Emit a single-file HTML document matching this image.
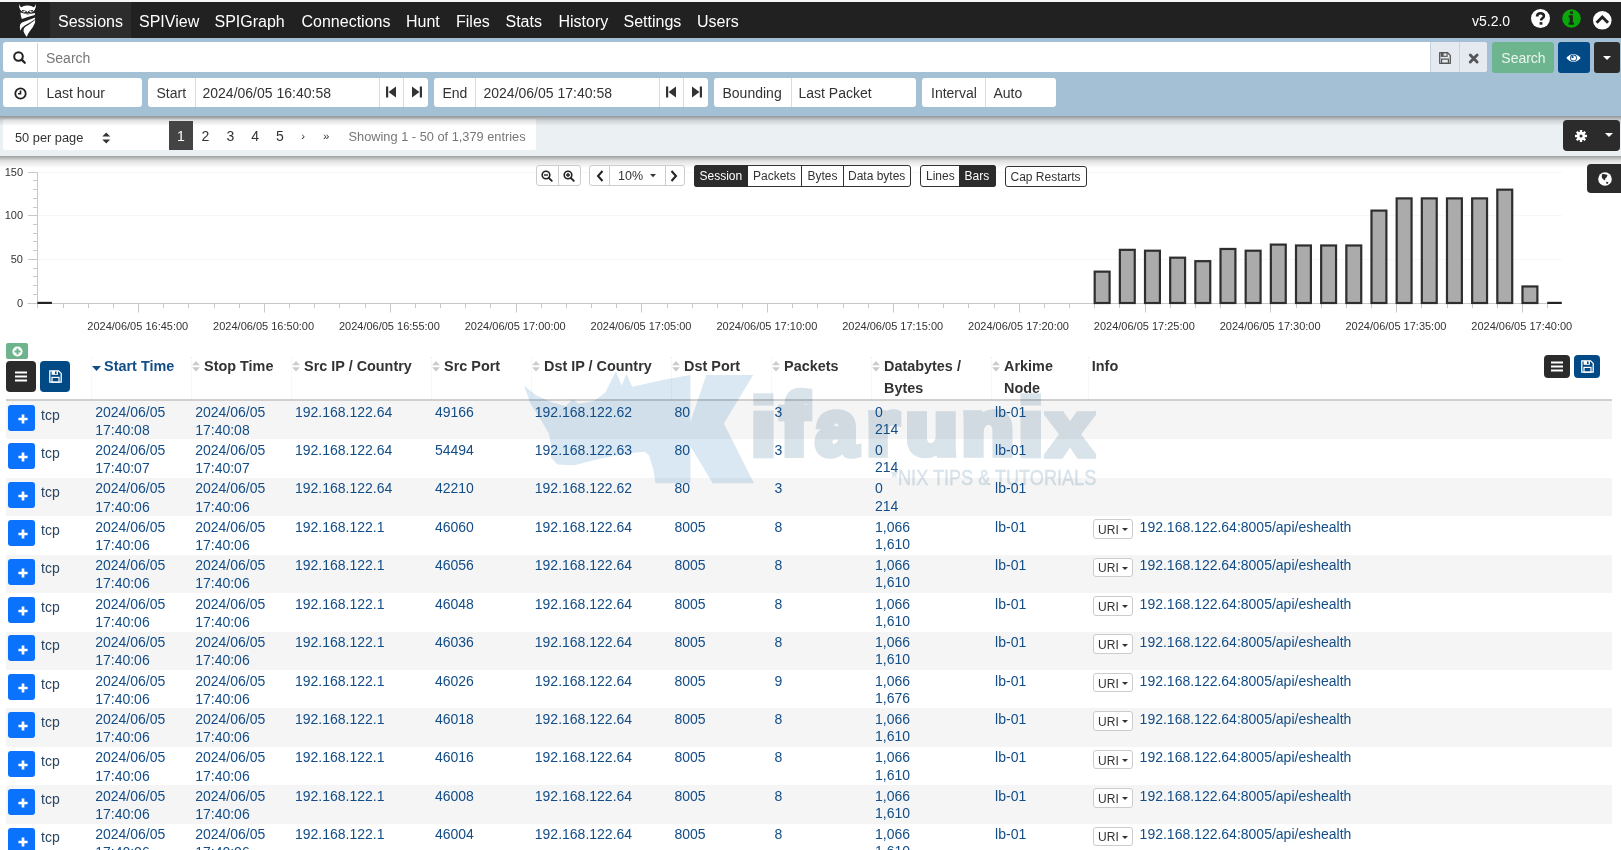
<!DOCTYPE html><html><head><meta charset="utf-8"><title>Arkime Sessions</title><style>
*{box-sizing:border-box;margin:0;padding:0}
html,body{width:1621px;height:850px;overflow:hidden;background:#fff;font-family:"Liberation Sans",sans-serif;}
.a{position:absolute}
.t{position:absolute;white-space:nowrap;line-height:1}
svg{position:absolute;overflow:visible}
</style></head><body>
<div class="a" style="left:0;top:0;width:1621px;height:2px;background:#f6f6f6"></div>
<div class="a" style="left:0;top:2px;width:1621px;height:35.5px;background:#212121"></div>
<div class="a" style="left:50px;top:2px;width:81px;height:35.5px;background:#2c2c2c"></div>
<svg style="left:18px;top:3px" width="18" height="35" viewBox="0 0 18 35">
<path fill="#fff" d="M1.2,0.7 Q1.6,3.2 3.2,4.3 Q6,2.4 9.5,2.6 Q13,2.4 15.8,4.3 Q17.4,3.2 17.7,0.7 Q18.6,4.5 16.6,7 Q15,9 13,10 L9.4,11 L6,10 Q4,9 2.4,7 Q0.4,4.5 1.2,0.7 Z"/>
<path fill="#212121" d="M3.8,7.2 Q6,6.4 8.6,8.2 L9.4,9.6 L10.3,8.2 Q13,6.4 15.2,7.2 Q14.8,9.2 12.4,9.7 L9.4,10.8 L6.6,9.7 Q4.2,9.2 3.8,7.2 Z"/>
<ellipse cx="6.4" cy="8.2" rx="1.3" ry="0.7" fill="#fff"/><ellipse cx="12.5" cy="8.2" rx="1.3" ry="0.7" fill="#fff"/>
<path fill="#fff" d="M2.4,9.6 Q6,10.6 9.4,11.6 Q13,10.6 16.9,10 L16.9,11.9 Q11,13.2 3.8,15.9 Q2.6,12.5 2.4,9.6 Z"/>
<path fill="#fff" d="M17.1,14.4 Q10,17.2 4,19.6 Q1.6,21 1.8,24 Q1.9,26.3 2.5,27.8 Q3.8,24.2 6.8,22.6 Q12.5,19.5 17.1,16.3 Z"/>
<path fill="#fff" d="M17.1,17 Q12,21 7.8,23.6 Q5.2,25.3 5.6,28.5 Q6.6,31.5 8.8,33.9 Q9.6,31 11.6,28.5 Q15.5,24 17.1,19.5 Z"/>
</svg>
<div class="t" style="left:58px;top:14px;font-size:16px;color:#fff">Sessions</div>
<div class="t" style="left:139px;top:14px;font-size:16px;color:#fff">SPIView</div>
<div class="t" style="left:214.5px;top:14px;font-size:16px;color:#fff">SPIGraph</div>
<div class="t" style="left:301.5px;top:14px;font-size:16px;color:#fff">Connections</div>
<div class="t" style="left:406px;top:14px;font-size:16px;color:#fff">Hunt</div>
<div class="t" style="left:456px;top:14px;font-size:16px;color:#fff">Files</div>
<div class="t" style="left:505.5px;top:14px;font-size:16px;color:#fff">Stats</div>
<div class="t" style="left:558.5px;top:14px;font-size:16px;color:#fff">History</div>
<div class="t" style="left:623.5px;top:14px;font-size:16px;color:#fff">Settings</div>
<div class="t" style="left:697px;top:14px;font-size:16px;color:#fff">Users</div>
<div class="t" style="left:1472px;top:14px;font-size:14px;color:#fff">v5.2.0</div>
<svg style="left:1531.2px;top:8.8px" width="19" height="19" viewBox="0 0 19 19"><circle cx="9.5" cy="9.5" r="9.5" fill="#fff"/>
<path d="M6.1,7.4 Q6.1,4.2 9.6,4.2 Q12.9,4.2 12.9,7 Q12.9,8.6 11,9.6 Q10.1,10.1 10.1,11.6" stroke="#212121" stroke-width="2.6" fill="none"/>
<rect x="8.6" y="13.1" width="2.8" height="2.6" fill="#212121"/></svg>
<svg style="left:1562px;top:8.8px" width="19" height="19" viewBox="0 0 19 19"><circle cx="9.5" cy="9.5" r="9.3" fill="#0aa70a"/>
<rect x="8.1" y="2.4" width="2.8" height="2.5" fill="#1a2a1a"/><path d="M6.6,6.2 H10.9 V13.6 H12 V15.8 H6.6 V13.6 H7.7 V8.4 H6.6 Z" fill="#1a2a1a"/></svg>
<svg style="left:1593px;top:10.9px" width="19" height="19" viewBox="0 0 19 19"><circle cx="9.3" cy="9.3" r="9.3" fill="#fff"/>
<path d="M3.6,11.8 L9.3,6 L15,11.8" stroke="#212121" stroke-width="2.9" fill="none"/></svg>
<div class="a" style="left:0;top:37.5px;width:1621px;height:78px;background:#a4c0d4"></div>
<div class="a" style="left:3px;top:42.2px;width:1484px;height:30px;background:#fff;border-radius:3px"></div>
<div class="a" style="left:37px;top:42.5px;width:1px;height:30px;background:#c9d6e0"></div>
<svg style="left:13px;top:51px" width="13" height="13" viewBox="0 0 13 13"><circle cx="5.5" cy="5.5" r="4.3" stroke="#212121" stroke-width="2" fill="none"/><path d="M8.6,8.6 L11.8,11.8" stroke="#212121" stroke-width="2.2" stroke-linecap="round"/></svg>
<div class="t" style="left:46px;top:51px;font-size:14px;color:#777">Search</div>
<div class="a" style="left:1430px;top:42.2px;width:57px;height:30px;background:#e4eaf0;border-left:1px solid #c9d3dc;border-radius:0 3px 3px 0"></div>
<div class="a" style="left:1459px;top:42.2px;width:1px;height:30px;background:#c9d3dc"></div>
<svg style="left:1439px;top:51.9px" width="12" height="12" viewBox="0 0 12 12"><path d="M0.7,0.7 H8.6 L11.3,3.4 V11.3 H0.7 Z" stroke="#555" stroke-width="1.3" fill="none" stroke-linejoin="round"/><rect x="2.3" y="0.7" width="5.8" height="3.6" fill="none" stroke="#555" stroke-width="1.1"/><rect x="2.3" y="0.7" width="2.3" height="3.6" fill="#555"/><rect x="2.6" y="7.1" width="6.8" height="4.2" fill="none" stroke="#555" stroke-width="1.2"/></svg>
<svg style="left:1468.8px;top:54px" width="9.4" height="9" viewBox="0 0 10 10"><path d="M1.2,1.2 L8.8,8.8 M8.8,1.2 L1.2,8.8" stroke="#555" stroke-width="3.2" stroke-linecap="round"/></svg>
<div class="a" style="left:1492px;top:42.2px;width:62px;height:30.6px;background:#6cb58e;border-radius:3px"></div>
<div class="t" style="left:1501.3px;top:51px;font-size:14px;color:#eaf6ee">Search</div>
<div class="a" style="left:1558px;top:42.2px;width:32px;height:30.6px;background:#024a86;border-radius:3px"></div>
<svg style="left:1566px;top:53px" width="15" height="10" viewBox="0 0 15 10"><path d="M0.3,5 Q7.5,-3 14.7,5 Q7.5,13 0.3,5 Z" fill="#fff"/><circle cx="7.5" cy="5" r="3.4" fill="#024a86"/><circle cx="7.5" cy="5" r="2.5" fill="#fff"/><circle cx="6.6" cy="4.1" r="1.1" fill="#024a86"/></svg>
<div class="a" style="left:1594px;top:42.2px;width:26px;height:30.6px;background:#2b2b2b;border-radius:3px"></div>
<svg style="left:1603.3px;top:55.5px" width="8" height="4" viewBox="0 0 8 4"><path d="M0,0 H8 L4,4 Z" fill="#fff"/></svg>
<div class="a" style="left:3px;top:77.5px;width:139px;height:29.5px;background:#fff;border-radius:3px"></div>
<div class="a" style="left:37px;top:77.5px;width:1px;height:29.5px;background:#d3dde5"></div>
<div class="a" style="left:147.5px;top:77.5px;width:280.5px;height:29.5px;background:#fff;border-radius:3px"></div>
<div class="a" style="left:194.5px;top:77.5px;width:1px;height:29.5px;background:#d3dde5"></div>
<div class="a" style="left:378.5px;top:77.5px;width:1px;height:29.5px;background:#d3dde5"></div>
<div class="a" style="left:403px;top:77.5px;width:1px;height:29.5px;background:#d3dde5"></div>
<div class="a" style="left:434px;top:77.5px;width:274px;height:29.5px;background:#fff;border-radius:3px"></div>
<div class="a" style="left:474.5px;top:77.5px;width:1px;height:29.5px;background:#d3dde5"></div>
<div class="a" style="left:658.5px;top:77.5px;width:1px;height:29.5px;background:#d3dde5"></div>
<div class="a" style="left:683px;top:77.5px;width:1px;height:29.5px;background:#d3dde5"></div>
<div class="a" style="left:714px;top:77.5px;width:202px;height:29.5px;background:#fff;border-radius:3px"></div>
<div class="a" style="left:790.5px;top:77.5px;width:1px;height:29.5px;background:#d3dde5"></div>
<div class="a" style="left:922px;top:77.5px;width:134px;height:29.5px;background:#fff;border-radius:3px"></div>
<div class="a" style="left:984.5px;top:77.5px;width:1px;height:29.5px;background:#d3dde5"></div>
<svg style="left:14px;top:86.6px" width="13" height="13" viewBox="0 0 13 13"><circle cx="6.5" cy="6.5" r="5.2" stroke="#212121" stroke-width="1.8" fill="none"/><path d="M6.5,3.4 V6.8 H4" stroke="#212121" stroke-width="1.6" fill="none"/></svg>
<div class="t" style="left:46.5px;top:85.5px;font-size:14px;color:#333">Last hour</div>
<div class="t" style="left:156.5px;top:85.5px;font-size:14px;color:#333">Start</div>
<div class="t" style="left:202.5px;top:85.5px;font-size:14px;color:#333">2024/06/05 16:40:58</div>
<div class="t" style="left:442.5px;top:85.5px;font-size:14px;color:#333">End</div>
<div class="t" style="left:483.5px;top:85.5px;font-size:14px;color:#333">2024/06/05 17:40:58</div>
<div class="t" style="left:722.5px;top:85.5px;font-size:14px;color:#333">Bounding</div>
<div class="t" style="left:798.5px;top:85.5px;font-size:14px;color:#333">Last Packet</div>
<div class="t" style="left:931px;top:85.5px;font-size:14px;color:#333">Interval</div>
<div class="t" style="left:993.5px;top:85.5px;font-size:14px;color:#333">Auto</div>
<svg style="left:386px;top:86px" width="11" height="12" viewBox="0 0 11 12"><rect x="0" y="0.5" width="2.2" height="11" fill="#333"/><path d="M10,0.5 V11.5 L2.5,6 Z" fill="#333"/></svg>
<svg style="left:411px;top:86px" width="11" height="12" viewBox="0 0 11 12"><rect x="8.8" y="0.5" width="2.2" height="11" fill="#333"/><path d="M1,0.5 V11.5 L8.5,6 Z" fill="#333"/></svg>
<svg style="left:666px;top:86px" width="11" height="12" viewBox="0 0 11 12"><rect x="0" y="0.5" width="2.2" height="11" fill="#333"/><path d="M10,0.5 V11.5 L2.5,6 Z" fill="#333"/></svg>
<svg style="left:691px;top:86px" width="11" height="12" viewBox="0 0 11 12"><rect x="8.8" y="0.5" width="2.2" height="11" fill="#333"/><path d="M1,0.5 V11.5 L8.5,6 Z" fill="#333"/></svg>
<div class="a" style="left:0;top:115.5px;width:1621px;height:40px;background:#ebf0f3"></div>
<div class="a" style="left:0;top:155.5px;width:1621px;height:12px;background:linear-gradient(rgba(0,0,0,.38),rgba(0,0,0,.12) 40%,rgba(0,0,0,0))"></div>
<div class="a" style="left:3px;top:118.5px;width:533px;height:31.8px;background:#fff;border-radius:2px"></div>
<div class="a" style="left:0;top:115.5px;width:1621px;height:10px;background:linear-gradient(rgba(0,0,0,.38),rgba(0,0,0,.12) 45%,rgba(0,0,0,0))"></div>
<div class="t" style="left:15px;top:132.2px;font-size:12.8px;color:#333">50 per page</div>
<svg style="left:102px;top:131.5px" width="8.5" height="12" viewBox="0 0 8.5 12"><path d="M0.3,4.6 L4.25,0.6 L8.2,4.6 Z M0.3,7.4 L4.25,11.4 L8.2,7.4 Z" fill="#333"/></svg>
<div class="a" style="left:169px;top:121px;width:24px;height:28.8px;background:#444"></div>
<div class="t" style="left:177px;top:128.8px;font-size:14px;color:#fff">1</div>
<div class="t" style="left:201.5px;top:128.8px;font-size:14px;color:#333">2</div>
<div class="t" style="left:226.4px;top:128.8px;font-size:14px;color:#333">3</div>
<div class="t" style="left:251.3px;top:128.8px;font-size:14px;color:#333">4</div>
<div class="t" style="left:275.9px;top:128.8px;font-size:14px;color:#333">5</div>
<div class="t" style="left:301.3px;top:130.5px;font-size:11.5px;color:#333">›</div>
<div class="t" style="left:323px;top:130.5px;font-size:11.5px;color:#333">»</div>
<div class="t" style="left:348.5px;top:131px;font-size:12.8px;color:#777">Showing 1 - 50 of 1,379 entries</div>
<div class="a" style="left:1563px;top:120px;width:57px;height:30.5px;background:#2b2b2b;border-radius:4px"></div>
<svg style="left:1575px;top:130px" width="12" height="12" viewBox="0 0 12 12"><g fill="#fff"><circle cx="6" cy="6" r="4.2"/><rect x="4.8" y="0" width="2.4" height="12"/><rect x="0" y="4.8" width="12" height="2.4"/><rect x="4.8" y="0" width="2.4" height="12" transform="rotate(45 6 6)"/><rect x="4.8" y="0" width="2.4" height="12" transform="rotate(-45 6 6)"/></g><circle cx="6" cy="6" r="1.5" fill="#2b2b2b"/></svg>
<svg style="left:1605px;top:133px" width="8" height="4" viewBox="0 0 8 4"><path d="M0,0 H8 L4,4 Z" fill="#fff"/></svg>
<svg style="left:0;top:0" width="1621" height="850" viewBox="0 0 1621 850">
<line x1="37.5" y1="259.5" x2="1562" y2="259.5" stroke="#f7f7f7" stroke-width="1"/>
<line x1="37.5" y1="215.5" x2="1562" y2="215.5" stroke="#f7f7f7" stroke-width="1"/>
<line x1="37.5" y1="172.5" x2="1562" y2="172.5" stroke="#f7f7f7" stroke-width="1"/>
<line x1="37.5" y1="172.20" x2="37.5" y2="308.0" stroke="#c8c8c8" stroke-width="1"/>
<line x1="28" y1="303.50" x2="37.5" y2="303.50" stroke="#c8c8c8" stroke-width="1"/>
<line x1="33" y1="294.50" x2="37.5" y2="294.50" stroke="#c8c8c8" stroke-width="1"/>
<line x1="33" y1="285.50" x2="37.5" y2="285.50" stroke="#c8c8c8" stroke-width="1"/>
<line x1="33" y1="276.50" x2="37.5" y2="276.50" stroke="#c8c8c8" stroke-width="1"/>
<line x1="33" y1="268.50" x2="37.5" y2="268.50" stroke="#c8c8c8" stroke-width="1"/>
<line x1="28" y1="259.50" x2="37.5" y2="259.50" stroke="#c8c8c8" stroke-width="1"/>
<line x1="33" y1="250.50" x2="37.5" y2="250.50" stroke="#c8c8c8" stroke-width="1"/>
<line x1="33" y1="241.50" x2="37.5" y2="241.50" stroke="#c8c8c8" stroke-width="1"/>
<line x1="33" y1="233.50" x2="37.5" y2="233.50" stroke="#c8c8c8" stroke-width="1"/>
<line x1="33" y1="224.50" x2="37.5" y2="224.50" stroke="#c8c8c8" stroke-width="1"/>
<line x1="28" y1="215.50" x2="37.5" y2="215.50" stroke="#c8c8c8" stroke-width="1"/>
<line x1="33" y1="207.50" x2="37.5" y2="207.50" stroke="#c8c8c8" stroke-width="1"/>
<line x1="33" y1="198.50" x2="37.5" y2="198.50" stroke="#c8c8c8" stroke-width="1"/>
<line x1="33" y1="189.50" x2="37.5" y2="189.50" stroke="#c8c8c8" stroke-width="1"/>
<line x1="33" y1="180.50" x2="37.5" y2="180.50" stroke="#c8c8c8" stroke-width="1"/>
<line x1="28" y1="172.50" x2="37.5" y2="172.50" stroke="#c8c8c8" stroke-width="1"/>
<line x1="27.5" y1="303.5" x2="1562" y2="303.5" stroke="#c8c8c8" stroke-width="1"/>
<line x1="37.50" y1="303.0" x2="37.50" y2="308" stroke="#c8c8c8" stroke-width="1"/>
<line x1="63.50" y1="303.0" x2="63.50" y2="308" stroke="#c8c8c8" stroke-width="1"/>
<line x1="88.50" y1="303.0" x2="88.50" y2="308" stroke="#c8c8c8" stroke-width="1"/>
<line x1="113.50" y1="303.0" x2="113.50" y2="308" stroke="#c8c8c8" stroke-width="1"/>
<line x1="138.50" y1="303.0" x2="138.50" y2="312.5" stroke="#c8c8c8" stroke-width="1"/>
<line x1="163.50" y1="303.0" x2="163.50" y2="308" stroke="#c8c8c8" stroke-width="1"/>
<line x1="188.50" y1="303.0" x2="188.50" y2="308" stroke="#c8c8c8" stroke-width="1"/>
<line x1="214.50" y1="303.0" x2="214.50" y2="308" stroke="#c8c8c8" stroke-width="1"/>
<line x1="239.50" y1="303.0" x2="239.50" y2="308" stroke="#c8c8c8" stroke-width="1"/>
<line x1="264.50" y1="303.0" x2="264.50" y2="312.5" stroke="#c8c8c8" stroke-width="1"/>
<line x1="289.50" y1="303.0" x2="289.50" y2="308" stroke="#c8c8c8" stroke-width="1"/>
<line x1="314.50" y1="303.0" x2="314.50" y2="308" stroke="#c8c8c8" stroke-width="1"/>
<line x1="339.50" y1="303.0" x2="339.50" y2="308" stroke="#c8c8c8" stroke-width="1"/>
<line x1="365.50" y1="303.0" x2="365.50" y2="308" stroke="#c8c8c8" stroke-width="1"/>
<line x1="390.50" y1="303.0" x2="390.50" y2="312.5" stroke="#c8c8c8" stroke-width="1"/>
<line x1="415.50" y1="303.0" x2="415.50" y2="308" stroke="#c8c8c8" stroke-width="1"/>
<line x1="440.50" y1="303.0" x2="440.50" y2="308" stroke="#c8c8c8" stroke-width="1"/>
<line x1="465.50" y1="303.0" x2="465.50" y2="308" stroke="#c8c8c8" stroke-width="1"/>
<line x1="490.50" y1="303.0" x2="490.50" y2="308" stroke="#c8c8c8" stroke-width="1"/>
<line x1="516.50" y1="303.0" x2="516.50" y2="312.5" stroke="#c8c8c8" stroke-width="1"/>
<line x1="541.50" y1="303.0" x2="541.50" y2="308" stroke="#c8c8c8" stroke-width="1"/>
<line x1="566.50" y1="303.0" x2="566.50" y2="308" stroke="#c8c8c8" stroke-width="1"/>
<line x1="591.50" y1="303.0" x2="591.50" y2="308" stroke="#c8c8c8" stroke-width="1"/>
<line x1="616.50" y1="303.0" x2="616.50" y2="308" stroke="#c8c8c8" stroke-width="1"/>
<line x1="641.50" y1="303.0" x2="641.50" y2="312.5" stroke="#c8c8c8" stroke-width="1"/>
<line x1="667.50" y1="303.0" x2="667.50" y2="308" stroke="#c8c8c8" stroke-width="1"/>
<line x1="692.50" y1="303.0" x2="692.50" y2="308" stroke="#c8c8c8" stroke-width="1"/>
<line x1="717.50" y1="303.0" x2="717.50" y2="308" stroke="#c8c8c8" stroke-width="1"/>
<line x1="742.50" y1="303.0" x2="742.50" y2="308" stroke="#c8c8c8" stroke-width="1"/>
<line x1="767.50" y1="303.0" x2="767.50" y2="312.5" stroke="#c8c8c8" stroke-width="1"/>
<line x1="792.50" y1="303.0" x2="792.50" y2="308" stroke="#c8c8c8" stroke-width="1"/>
<line x1="817.50" y1="303.0" x2="817.50" y2="308" stroke="#c8c8c8" stroke-width="1"/>
<line x1="843.50" y1="303.0" x2="843.50" y2="308" stroke="#c8c8c8" stroke-width="1"/>
<line x1="868.50" y1="303.0" x2="868.50" y2="308" stroke="#c8c8c8" stroke-width="1"/>
<line x1="893.50" y1="303.0" x2="893.50" y2="312.5" stroke="#c8c8c8" stroke-width="1"/>
<line x1="918.50" y1="303.0" x2="918.50" y2="308" stroke="#c8c8c8" stroke-width="1"/>
<line x1="943.50" y1="303.0" x2="943.50" y2="308" stroke="#c8c8c8" stroke-width="1"/>
<line x1="968.50" y1="303.0" x2="968.50" y2="308" stroke="#c8c8c8" stroke-width="1"/>
<line x1="994.50" y1="303.0" x2="994.50" y2="308" stroke="#c8c8c8" stroke-width="1"/>
<line x1="1019.50" y1="303.0" x2="1019.50" y2="312.5" stroke="#c8c8c8" stroke-width="1"/>
<line x1="1044.50" y1="303.0" x2="1044.50" y2="308" stroke="#c8c8c8" stroke-width="1"/>
<line x1="1069.50" y1="303.0" x2="1069.50" y2="308" stroke="#c8c8c8" stroke-width="1"/>
<line x1="1094.50" y1="303.0" x2="1094.50" y2="308" stroke="#c8c8c8" stroke-width="1"/>
<line x1="1119.50" y1="303.0" x2="1119.50" y2="308" stroke="#c8c8c8" stroke-width="1"/>
<line x1="1145.50" y1="303.0" x2="1145.50" y2="312.5" stroke="#c8c8c8" stroke-width="1"/>
<line x1="1170.50" y1="303.0" x2="1170.50" y2="308" stroke="#c8c8c8" stroke-width="1"/>
<line x1="1195.50" y1="303.0" x2="1195.50" y2="308" stroke="#c8c8c8" stroke-width="1"/>
<line x1="1220.50" y1="303.0" x2="1220.50" y2="308" stroke="#c8c8c8" stroke-width="1"/>
<line x1="1245.50" y1="303.0" x2="1245.50" y2="308" stroke="#c8c8c8" stroke-width="1"/>
<line x1="1270.50" y1="303.0" x2="1270.50" y2="312.5" stroke="#c8c8c8" stroke-width="1"/>
<line x1="1296.50" y1="303.0" x2="1296.50" y2="308" stroke="#c8c8c8" stroke-width="1"/>
<line x1="1321.50" y1="303.0" x2="1321.50" y2="308" stroke="#c8c8c8" stroke-width="1"/>
<line x1="1346.50" y1="303.0" x2="1346.50" y2="308" stroke="#c8c8c8" stroke-width="1"/>
<line x1="1371.50" y1="303.0" x2="1371.50" y2="308" stroke="#c8c8c8" stroke-width="1"/>
<line x1="1396.50" y1="303.0" x2="1396.50" y2="312.5" stroke="#c8c8c8" stroke-width="1"/>
<line x1="1421.50" y1="303.0" x2="1421.50" y2="308" stroke="#c8c8c8" stroke-width="1"/>
<line x1="1447.50" y1="303.0" x2="1447.50" y2="308" stroke="#c8c8c8" stroke-width="1"/>
<line x1="1472.50" y1="303.0" x2="1472.50" y2="308" stroke="#c8c8c8" stroke-width="1"/>
<line x1="1497.50" y1="303.0" x2="1497.50" y2="308" stroke="#c8c8c8" stroke-width="1"/>
<line x1="1522.50" y1="303.0" x2="1522.50" y2="312.5" stroke="#c8c8c8" stroke-width="1"/>
<line x1="1547.50" y1="303.0" x2="1547.50" y2="308" stroke="#c8c8c8" stroke-width="1"/>
<rect x="37.40" y="301.80" width="14.5" height="2.2" fill="#222"/>
<rect x="1094.69" y="271.64" width="14.90" height="31.36" fill="#ababab" stroke="#2e2e2e" stroke-width="2.2"/>
<rect x="1119.85" y="249.84" width="14.90" height="53.16" fill="#ababab" stroke="#2e2e2e" stroke-width="2.2"/>
<rect x="1145.02" y="250.71" width="14.90" height="52.29" fill="#ababab" stroke="#2e2e2e" stroke-width="2.2"/>
<rect x="1170.18" y="257.68" width="14.90" height="45.32" fill="#ababab" stroke="#2e2e2e" stroke-width="2.2"/>
<rect x="1195.34" y="261.17" width="14.90" height="41.83" fill="#ababab" stroke="#2e2e2e" stroke-width="2.2"/>
<rect x="1220.51" y="248.96" width="14.90" height="54.04" fill="#ababab" stroke="#2e2e2e" stroke-width="2.2"/>
<rect x="1245.67" y="250.71" width="14.90" height="52.29" fill="#ababab" stroke="#2e2e2e" stroke-width="2.2"/>
<rect x="1270.84" y="244.60" width="14.90" height="58.40" fill="#ababab" stroke="#2e2e2e" stroke-width="2.2"/>
<rect x="1296.00" y="245.48" width="14.90" height="57.52" fill="#ababab" stroke="#2e2e2e" stroke-width="2.2"/>
<rect x="1321.16" y="245.48" width="14.90" height="57.52" fill="#ababab" stroke="#2e2e2e" stroke-width="2.2"/>
<rect x="1346.33" y="245.48" width="14.90" height="57.52" fill="#ababab" stroke="#2e2e2e" stroke-width="2.2"/>
<rect x="1371.49" y="210.60" width="14.90" height="92.40" fill="#ababab" stroke="#2e2e2e" stroke-width="2.2"/>
<rect x="1396.66" y="198.39" width="14.90" height="104.61" fill="#ababab" stroke="#2e2e2e" stroke-width="2.2"/>
<rect x="1421.82" y="198.39" width="14.90" height="104.61" fill="#ababab" stroke="#2e2e2e" stroke-width="2.2"/>
<rect x="1446.98" y="198.39" width="14.90" height="104.61" fill="#ababab" stroke="#2e2e2e" stroke-width="2.2"/>
<rect x="1472.15" y="198.39" width="14.90" height="104.61" fill="#ababab" stroke="#2e2e2e" stroke-width="2.2"/>
<rect x="1497.31" y="189.67" width="14.90" height="113.33" fill="#ababab" stroke="#2e2e2e" stroke-width="2.2"/>
<rect x="1522.48" y="286.46" width="14.90" height="16.54" fill="#ababab" stroke="#2e2e2e" stroke-width="2.2"/>
<rect x="1547.24" y="301.80" width="14.5" height="2.2" fill="#222"/>
</svg>
<div class="t" style="right:1598px;top:297.50px;font-size:11px;color:#333">0</div>
<div class="t" style="right:1598px;top:253.90px;font-size:11px;color:#333">50</div>
<div class="t" style="right:1598px;top:210.30px;font-size:11px;color:#333">100</div>
<div class="t" style="right:1598px;top:166.70px;font-size:11px;color:#333">150</div>
<div class="t" style="left:87.26px;top:320.5px;width:101px;text-align:center;font-size:11px;color:#333">2024/06/05 16:45:00</div>
<div class="t" style="left:213.08px;top:320.5px;width:101px;text-align:center;font-size:11px;color:#333">2024/06/05 16:50:00</div>
<div class="t" style="left:338.90px;top:320.5px;width:101px;text-align:center;font-size:11px;color:#333">2024/06/05 16:55:00</div>
<div class="t" style="left:464.72px;top:320.5px;width:101px;text-align:center;font-size:11px;color:#333">2024/06/05 17:00:00</div>
<div class="t" style="left:590.54px;top:320.5px;width:101px;text-align:center;font-size:11px;color:#333">2024/06/05 17:05:00</div>
<div class="t" style="left:716.36px;top:320.5px;width:101px;text-align:center;font-size:11px;color:#333">2024/06/05 17:10:00</div>
<div class="t" style="left:842.18px;top:320.5px;width:101px;text-align:center;font-size:11px;color:#333">2024/06/05 17:15:00</div>
<div class="t" style="left:968.00px;top:320.5px;width:101px;text-align:center;font-size:11px;color:#333">2024/06/05 17:20:00</div>
<div class="t" style="left:1093.82px;top:320.5px;width:101px;text-align:center;font-size:11px;color:#333">2024/06/05 17:25:00</div>
<div class="t" style="left:1219.64px;top:320.5px;width:101px;text-align:center;font-size:11px;color:#333">2024/06/05 17:30:00</div>
<div class="t" style="left:1345.46px;top:320.5px;width:101px;text-align:center;font-size:11px;color:#333">2024/06/05 17:35:00</div>
<div class="t" style="left:1471.28px;top:320.5px;width:101px;text-align:center;font-size:11px;color:#333">2024/06/05 17:40:00</div>
<div class="a" style="left:535.5px;top:165px;width:45.0px;height:21px;border:1px solid #ccc;border-radius:3px;background:#fff"></div>
<div class="a" style="left:558px;top:165px;width:1px;height:21px;background:#ccc"></div>
<div class="a" style="left:589px;top:165px;width:95.5px;height:21px;border:1px solid #ccc;border-radius:3px;background:#fff"></div>
<div class="a" style="left:609px;top:165px;width:1px;height:21px;background:#ccc"></div>
<div class="a" style="left:665px;top:165px;width:1px;height:21px;background:#ccc"></div>
<svg style="left:541px;top:169.5px" width="12" height="12" viewBox="0 0 12 12"><circle cx="5" cy="5" r="3.8" stroke="#222" stroke-width="1.6" fill="none"/><path d="M7.8,7.8 L10.8,10.8" stroke="#222" stroke-width="1.9" stroke-linecap="round"/><path d="M3,5 H7" stroke="#222" stroke-width="1.4"/></svg>
<svg style="left:563px;top:169.5px" width="12" height="12" viewBox="0 0 12 12"><circle cx="5" cy="5" r="3.8" stroke="#222" stroke-width="1.6" fill="none"/><path d="M7.8,7.8 L10.8,10.8" stroke="#222" stroke-width="1.9" stroke-linecap="round"/><path d="M3,5 H7 M5,3 V7" stroke="#222" stroke-width="1.4"/></svg>
<svg style="left:596px;top:170px" width="8" height="12" viewBox="0 0 8 12"><path d="M6.5,1 L2,6 L6.5,11" stroke="#222" stroke-width="2" fill="none"/></svg>
<svg style="left:670px;top:170px" width="8" height="12" viewBox="0 0 8 12"><path d="M1.5,1 L6,6 L1.5,11" stroke="#222" stroke-width="2" fill="none"/></svg>
<div class="t" style="left:618px;top:170px;font-size:12.5px;color:#333">10%</div>
<svg style="left:650px;top:173.5px" width="6" height="4" viewBox="0 0 6 4"><path d="M0,0 H6 L3,3.2 Z" fill="#333"/></svg>
<div class="a" style="left:694px;top:165px;width:216.5px;height:21.5px;border:1px solid #333;border-radius:3px;background:#fff"></div>
<div class="a" style="left:694px;top:165px;width:54px;height:21.5px;background:#2b2b2b;border-radius:3px 0 0 3px"></div>
<div class="a" style="left:801px;top:165px;width:1px;height:21.5px;background:#333"></div>
<div class="a" style="left:842.5px;top:165px;width:1px;height:21.5px;background:#333"></div>
<div class="t" style="left:699.5px;top:169.5px;font-size:12px;color:#fff">Session</div>
<div class="t" style="left:753px;top:169.5px;font-size:12px;color:#333">Packets</div>
<div class="t" style="left:807.5px;top:169.5px;font-size:12px;color:#333">Bytes</div>
<div class="t" style="left:848px;top:169.5px;font-size:12px;color:#333">Data bytes</div>
<div class="a" style="left:920px;top:165px;width:76px;height:21.5px;border:1px solid #333;border-radius:3px;background:#fff"></div>
<div class="a" style="left:959px;top:165px;width:37px;height:21.5px;background:#2b2b2b;border-radius:0 3px 3px 0"></div>
<div class="t" style="left:926px;top:169.5px;font-size:12px;color:#333">Lines</div>
<div class="t" style="left:964.5px;top:169.5px;font-size:12px;color:#fff">Bars</div>
<div class="a" style="left:1005px;top:165.5px;width:81.5px;height:21px;border:1px solid #333;border-radius:3px;background:#fff"></div>
<div class="t" style="left:1010.5px;top:170.5px;font-size:12px;color:#333">Cap Restarts</div>
<div class="a" style="left:1587px;top:164px;width:40px;height:28.5px;background:#2b2b2b;border-radius:4px"></div>
<svg style="left:1598px;top:172px" width="14" height="14" viewBox="0 0 14 14"><circle cx="7" cy="7" r="6.8" fill="#fff"/><path d="M4,2.2 Q6,1.5 8,2.5 L9.5,3 Q9,4.5 8.5,5.5 L7.5,6 L7,8.5 L5.5,7.5 L4,6 Q3.5,4 4,2.2 Z" fill="#2b2b2b"/><path d="M8.5,9.5 L10.5,10.5 L9.5,12 L8,11.2 Z" fill="#2b2b2b"/></svg>
<div class="a" style="left:6px;top:343px;width:22px;height:15.5px;background:#6db48d;border-radius:2px"></div>
<svg style="left:11.5px;top:346px" width="11" height="11" viewBox="0 0 11 11"><circle cx="5.5" cy="5.5" r="5.1" fill="#fff"/><path d="M5.5,2.4 V8.6 M2.4,5.5 H8.6" stroke="#6db48d" stroke-width="2.1"/></svg>
<div class="a" style="left:6px;top:361px;width:30px;height:31px;background:#2b2b2b;border-radius:4px"></div>
<svg style="left:15.0px;top:371.0px" width="12" height="11" viewBox="0 0 12 11"><rect x="0" y="0.5" width="12" height="2" fill="#fff"/><rect x="0" y="4.5" width="12" height="2" fill="#fff"/><rect x="0" y="8.5" width="12" height="2" fill="#fff"/></svg>
<div class="a" style="left:40px;top:361px;width:30px;height:31px;background:#024a86;border-radius:4px"></div>
<svg style="left:48.5px;top:370.0px" width="13" height="13" viewBox="0 0 13 13"><path d="M0.8,0.8 H9.6 L12.2,3.4 V12.2 H0.8 Z" fill="none" stroke="#fff" stroke-width="1.3"/><rect x="2.6" y="0.8" width="6.4" height="4" fill="#fff"/><rect x="6" y="1.5" width="1.6" height="2.5" fill="#024a86"/><rect x="3" y="7.4" width="7" height="4.8" fill="none" stroke="#fff" stroke-width="1.2"/></svg>
<div class="a" style="left:1544px;top:355px;width:25.7px;height:23px;background:#2b2b2b;border-radius:4px"></div>
<svg style="left:1550.8px;top:361.0px" width="12" height="11" viewBox="0 0 12 11"><rect x="0" y="0.5" width="12" height="2" fill="#fff"/><rect x="0" y="4.5" width="12" height="2" fill="#fff"/><rect x="0" y="8.5" width="12" height="2" fill="#fff"/></svg>
<div class="a" style="left:1574px;top:355px;width:26px;height:23px;background:#024a86;border-radius:4px"></div>
<svg style="left:1580.5px;top:360.0px" width="13" height="13" viewBox="0 0 13 13"><path d="M0.8,0.8 H9.6 L12.2,3.4 V12.2 H0.8 Z" fill="none" stroke="#fff" stroke-width="1.3"/><rect x="2.6" y="0.8" width="6.4" height="4" fill="#fff"/><rect x="6" y="1.5" width="1.6" height="2.5" fill="#024a86"/><rect x="3" y="7.4" width="7" height="4.8" fill="none" stroke="#fff" stroke-width="1.2"/></svg>
<svg style="left:92px;top:366.3px" width="9" height="6" viewBox="0 0 9 6"><path d="M0,0 H9 L4.5,5 Z" fill="#124d87"/></svg>
<div class="t" style="left:104.1px;top:358.8px;font-size:14.4px;font-weight:bold;color:#124d87">Start Time</div>
<svg style="left:192px;top:360.5px" width="8" height="11" viewBox="0 0 8 11"><path d="M0,4.3 L4,0 L8,4.3 Z M0,6.3 L4,10.6 L8,6.3 Z" fill="#cbcbcb"/></svg>
<div class="t" style="left:204.1px;top:358.8px;font-size:14.4px;font-weight:bold;color:#333">Stop Time</div>
<svg style="left:292px;top:360.5px" width="8" height="11" viewBox="0 0 8 11"><path d="M0,4.3 L4,0 L8,4.3 Z M0,6.3 L4,10.6 L8,6.3 Z" fill="#cbcbcb"/></svg>
<div class="t" style="left:304.1px;top:358.8px;font-size:14.4px;font-weight:bold;color:#333">Src IP / Country</div>
<svg style="left:432px;top:360.5px" width="8" height="11" viewBox="0 0 8 11"><path d="M0,4.3 L4,0 L8,4.3 Z M0,6.3 L4,10.6 L8,6.3 Z" fill="#cbcbcb"/></svg>
<div class="t" style="left:444.1px;top:358.8px;font-size:14.4px;font-weight:bold;color:#333">Src Port</div>
<svg style="left:532px;top:360.5px" width="8" height="11" viewBox="0 0 8 11"><path d="M0,4.3 L4,0 L8,4.3 Z M0,6.3 L4,10.6 L8,6.3 Z" fill="#cbcbcb"/></svg>
<div class="t" style="left:544.1px;top:358.8px;font-size:14.4px;font-weight:bold;color:#333">Dst IP / Country</div>
<svg style="left:672px;top:360.5px" width="8" height="11" viewBox="0 0 8 11"><path d="M0,4.3 L4,0 L8,4.3 Z M0,6.3 L4,10.6 L8,6.3 Z" fill="#cbcbcb"/></svg>
<div class="t" style="left:684.1px;top:358.8px;font-size:14.4px;font-weight:bold;color:#333">Dst Port</div>
<svg style="left:772px;top:360.5px" width="8" height="11" viewBox="0 0 8 11"><path d="M0,4.3 L4,0 L8,4.3 Z M0,6.3 L4,10.6 L8,6.3 Z" fill="#cbcbcb"/></svg>
<div class="t" style="left:784.1px;top:358.8px;font-size:14.4px;font-weight:bold;color:#333">Packets</div>
<svg style="left:872px;top:360.5px" width="8" height="11" viewBox="0 0 8 11"><path d="M0,4.3 L4,0 L8,4.3 Z M0,6.3 L4,10.6 L8,6.3 Z" fill="#cbcbcb"/></svg>
<div class="t" style="left:884.1px;top:358.8px;font-size:14.4px;font-weight:bold;color:#333">Databytes /</div>
<div class="t" style="left:884.1px;top:380.7px;font-size:14.4px;font-weight:bold;color:#333">Bytes</div>
<svg style="left:992px;top:360.5px" width="8" height="11" viewBox="0 0 8 11"><path d="M0,4.3 L4,0 L8,4.3 Z M0,6.3 L4,10.6 L8,6.3 Z" fill="#cbcbcb"/></svg>
<div class="t" style="left:1004.1px;top:358.8px;font-size:14.4px;font-weight:bold;color:#333">Arkime</div>
<div class="t" style="left:1004.1px;top:380.7px;font-size:14.4px;font-weight:bold;color:#333">Node</div>
<div class="t" style="left:1091.8px;top:358.8px;font-size:14.4px;font-weight:bold;color:#333">Info</div>
<div class="a" style="left:90.5px;top:357px;width:1px;height:42px;border-left:1px dotted #f0f0f0"></div>
<div class="a" style="left:190.5px;top:357px;width:1px;height:42px;border-left:1px dotted #f0f0f0"></div>
<div class="a" style="left:290.5px;top:357px;width:1px;height:42px;border-left:1px dotted #f0f0f0"></div>
<div class="a" style="left:430.5px;top:357px;width:1px;height:42px;border-left:1px dotted #f0f0f0"></div>
<div class="a" style="left:530.5px;top:357px;width:1px;height:42px;border-left:1px dotted #f0f0f0"></div>
<div class="a" style="left:670.5px;top:357px;width:1px;height:42px;border-left:1px dotted #f0f0f0"></div>
<div class="a" style="left:770.5px;top:357px;width:1px;height:42px;border-left:1px dotted #f0f0f0"></div>
<div class="a" style="left:870.5px;top:357px;width:1px;height:42px;border-left:1px dotted #f0f0f0"></div>
<div class="a" style="left:990.5px;top:357px;width:1px;height:42px;border-left:1px dotted #f0f0f0"></div>
<div class="a" style="left:1087.5px;top:357px;width:1px;height:42px;border-left:1px dotted #f0f0f0"></div>
<div class="a" style="left:6px;top:399px;width:1606px;height:2px;background:#cfcfcf"></div>
<div class="a" style="left:6px;top:401.00px;width:1606px;height:38.43px;background:#f5f5f5"></div>
<div class="a" style="left:6px;top:477.86px;width:1606px;height:38.43px;background:#f5f5f5"></div>
<div class="a" style="left:6px;top:554.72px;width:1606px;height:38.43px;background:#f5f5f5"></div>
<div class="a" style="left:6px;top:631.58px;width:1606px;height:38.43px;background:#f5f5f5"></div>
<div class="a" style="left:6px;top:708.44px;width:1606px;height:38.43px;background:#f5f5f5"></div>
<div class="a" style="left:6px;top:785.30px;width:1606px;height:38.43px;background:#f5f5f5"></div>
<svg style="left:0;top:0;mix-blend-mode:multiply" width="1621" height="850" viewBox="0 0 1621 850"><path d="M524.2,386.1 L536.2,395.3 L551.7,402.3 L565.8,405.9 L572.9,399.2 L578.5,403.8 L594.0,400.9 L605.3,392.5 L615.9,371.3 L621.6,385.4 L626.5,374.1 L632.1,386.8 L645.0,384.0 L665.0,379.5 L690.4,375.1 L690.4,422.0 L706.3,375.1 L753.2,375.1 L723.8,423.6 L754.0,483.2 L712.7,483.2 L690.4,445.9 L690.4,483.2 L655.4,483.2 L653.8,471.3 L649.1,455.4 L645.0,451.7 L627.9,453.2 L599.7,458.8 L574.3,465.2 L557.3,464.4 L551.0,457.4 L551.0,444.7 L548.9,433.4 L540.4,419.3 L530.5,403.8 Z" fill="#d9e8f3"/></svg>
<div class="t" style="left:781.34px;top:383.00px;font-size:80px;font-weight:bold;color:#d9e3ea;-webkit-text-stroke:8px #d9e3ea;mix-blend-mode:multiply;transform:scale(1.0147,1.0606);transform-origin:0 0">f</div>
<div class="t" style="left:816.25px;top:390.46px;font-size:80px;font-weight:bold;color:#d9e3ea;-webkit-text-stroke:8px #d9e3ea;mix-blend-mode:multiply;transform:scale(0.9275,0.9519);transform-origin:0 0">a</div>
<div class="t" style="left:866.99px;top:390.48px;font-size:80px;font-weight:bold;color:#d9e3ea;-webkit-text-stroke:8px #d9e3ea;mix-blend-mode:multiply;transform:scale(1.0121,0.9510);transform-origin:0 0">r</div>
<div class="t" style="left:906.45px;top:392.24px;font-size:80px;font-weight:bold;color:#d9e3ea;-webkit-text-stroke:8px #d9e3ea;mix-blend-mode:multiply;transform:scale(1.0511,0.9314);transform-origin:0 0">u</div>
<div class="t" style="left:962.45px;top:390.36px;font-size:80px;font-weight:bold;color:#d9e3ea;-webkit-text-stroke:8px #d9e3ea;mix-blend-mode:multiply;transform:scale(1.0532,0.9569);transform-origin:0 0">n</div>
<div class="t" style="left:1047.88px;top:390.57px;font-size:80px;font-weight:bold;color:#d9e3ea;-webkit-text-stroke:8px #d9e3ea;mix-blend-mode:multiply;transform:scale(0.9962,0.9540);transform-origin:0 0">x</div>
<svg style="left:0;top:0;mix-blend-mode:multiply" width="1621" height="850" viewBox="0 0 1621 850"><g fill="#d9e3ea"><rect x="753.3" y="393.3" width="20.3" height="12.3"/><rect x="753.3" y="410.6" width="20.3" height="47.7"/><rect x="1020.5" y="393.3" width="20.5" height="12.3"/><rect x="1020.5" y="410.6" width="20.5" height="47.7"/></g></svg>
<div class="t" style="left:891px;top:465.5px;font-size:20px;color:#d8e3eb;-webkit-text-stroke:0.35px #d8e3eb;mix-blend-mode:multiply;transform:scale(0.905,1.125);transform-origin:0 0">*NIX TIPS &amp; TUTORIALS</div>
<div class="a" style="left:8px;top:404.80px;width:27px;height:26px;background:#0b72fe;border-radius:3px"></div>
<svg style="left:17.5px;top:414.00px" width="10" height="10" viewBox="0 0 10 10"><path d="M5,0.4 V9.6 M0.4,5 H9.6" stroke="#fff" stroke-width="2.7"/></svg>
<div class="t" style="left:41px;top:407.65px;font-size:14px;color:#2b4560">tcp</div>
<div class="t" style="left:95.2px;top:404.55px;font-size:14px;color:#124d87">2024/06/05</div>
<div class="t" style="left:95.2px;top:422.75px;font-size:14px;color:#124d87">17:40:08</div>
<div class="t" style="left:195.2px;top:404.55px;font-size:14px;color:#124d87">2024/06/05</div>
<div class="t" style="left:195.2px;top:422.75px;font-size:14px;color:#124d87">17:40:08</div>
<div class="t" style="left:295px;top:404.55px;font-size:14px;color:#124d87">192.168.122.64</div>
<div class="t" style="left:434.9px;top:404.55px;font-size:14px;color:#124d87">49166</div>
<div class="t" style="left:534.8px;top:404.55px;font-size:14px;color:#124d87">192.168.122.62</div>
<div class="t" style="left:674.5px;top:404.55px;font-size:14px;color:#124d87">80</div>
<div class="t" style="left:774.5px;top:404.55px;font-size:14px;color:#124d87">3</div>
<div class="t" style="left:875px;top:404.55px;font-size:14px;color:#124d87">0</div>
<div class="t" style="left:875px;top:421.75px;font-size:14px;color:#124d87">214</div>
<div class="t" style="left:995.1px;top:404.55px;font-size:14px;color:#124d87">lb-01</div>
<div class="a" style="left:8px;top:443.23px;width:27px;height:26px;background:#0b72fe;border-radius:3px"></div>
<svg style="left:17.5px;top:452.43px" width="10" height="10" viewBox="0 0 10 10"><path d="M5,0.4 V9.6 M0.4,5 H9.6" stroke="#fff" stroke-width="2.7"/></svg>
<div class="t" style="left:41px;top:446.08px;font-size:14px;color:#2b4560">tcp</div>
<div class="t" style="left:95.2px;top:442.98px;font-size:14px;color:#124d87">2024/06/05</div>
<div class="t" style="left:95.2px;top:461.18px;font-size:14px;color:#124d87">17:40:07</div>
<div class="t" style="left:195.2px;top:442.98px;font-size:14px;color:#124d87">2024/06/05</div>
<div class="t" style="left:195.2px;top:461.18px;font-size:14px;color:#124d87">17:40:07</div>
<div class="t" style="left:295px;top:442.98px;font-size:14px;color:#124d87">192.168.122.64</div>
<div class="t" style="left:434.9px;top:442.98px;font-size:14px;color:#124d87">54494</div>
<div class="t" style="left:534.8px;top:442.98px;font-size:14px;color:#124d87">192.168.122.63</div>
<div class="t" style="left:674.5px;top:442.98px;font-size:14px;color:#124d87">80</div>
<div class="t" style="left:774.5px;top:442.98px;font-size:14px;color:#124d87">3</div>
<div class="t" style="left:875px;top:442.98px;font-size:14px;color:#124d87">0</div>
<div class="t" style="left:875px;top:460.18px;font-size:14px;color:#124d87">214</div>
<div class="t" style="left:995.1px;top:442.98px;font-size:14px;color:#124d87">lb-01</div>
<div class="a" style="left:8px;top:481.66px;width:27px;height:26px;background:#0b72fe;border-radius:3px"></div>
<svg style="left:17.5px;top:490.86px" width="10" height="10" viewBox="0 0 10 10"><path d="M5,0.4 V9.6 M0.4,5 H9.6" stroke="#fff" stroke-width="2.7"/></svg>
<div class="t" style="left:41px;top:484.51px;font-size:14px;color:#2b4560">tcp</div>
<div class="t" style="left:95.2px;top:481.41px;font-size:14px;color:#124d87">2024/06/05</div>
<div class="t" style="left:95.2px;top:499.61px;font-size:14px;color:#124d87">17:40:06</div>
<div class="t" style="left:195.2px;top:481.41px;font-size:14px;color:#124d87">2024/06/05</div>
<div class="t" style="left:195.2px;top:499.61px;font-size:14px;color:#124d87">17:40:06</div>
<div class="t" style="left:295px;top:481.41px;font-size:14px;color:#124d87">192.168.122.64</div>
<div class="t" style="left:434.9px;top:481.41px;font-size:14px;color:#124d87">42210</div>
<div class="t" style="left:534.8px;top:481.41px;font-size:14px;color:#124d87">192.168.122.62</div>
<div class="t" style="left:674.5px;top:481.41px;font-size:14px;color:#124d87">80</div>
<div class="t" style="left:774.5px;top:481.41px;font-size:14px;color:#124d87">3</div>
<div class="t" style="left:875px;top:481.41px;font-size:14px;color:#124d87">0</div>
<div class="t" style="left:875px;top:498.61px;font-size:14px;color:#124d87">214</div>
<div class="t" style="left:995.1px;top:481.41px;font-size:14px;color:#124d87">lb-01</div>
<div class="a" style="left:8px;top:520.09px;width:27px;height:26px;background:#0b72fe;border-radius:3px"></div>
<svg style="left:17.5px;top:529.29px" width="10" height="10" viewBox="0 0 10 10"><path d="M5,0.4 V9.6 M0.4,5 H9.6" stroke="#fff" stroke-width="2.7"/></svg>
<div class="t" style="left:41px;top:522.94px;font-size:14px;color:#2b4560">tcp</div>
<div class="t" style="left:95.2px;top:519.84px;font-size:14px;color:#124d87">2024/06/05</div>
<div class="t" style="left:95.2px;top:538.04px;font-size:14px;color:#124d87">17:40:06</div>
<div class="t" style="left:195.2px;top:519.84px;font-size:14px;color:#124d87">2024/06/05</div>
<div class="t" style="left:195.2px;top:538.04px;font-size:14px;color:#124d87">17:40:06</div>
<div class="t" style="left:295px;top:519.84px;font-size:14px;color:#124d87">192.168.122.1</div>
<div class="t" style="left:434.9px;top:519.84px;font-size:14px;color:#124d87">46060</div>
<div class="t" style="left:534.8px;top:519.84px;font-size:14px;color:#124d87">192.168.122.64</div>
<div class="t" style="left:674.5px;top:519.84px;font-size:14px;color:#124d87">8005</div>
<div class="t" style="left:774.5px;top:519.84px;font-size:14px;color:#124d87">8</div>
<div class="t" style="left:875px;top:519.84px;font-size:14px;color:#124d87">1,066</div>
<div class="t" style="left:875px;top:537.04px;font-size:14px;color:#124d87">1,610</div>
<div class="t" style="left:995.1px;top:519.84px;font-size:14px;color:#124d87">lb-01</div>
<div class="a" style="left:1093.3px;top:519.19px;width:39.5px;height:19.5px;border:1px solid #ccc;border-radius:3px;background:#fff"></div>
<div class="t" style="left:1098.1px;top:523.93px;font-size:12px;color:#333">URI</div>
<svg style="left:1121.5px;top:528.29px" width="6" height="4" viewBox="0 0 6 4"><path d="M0,0 H6 L3,3 Z" fill="#333"/></svg>
<div class="t" style="left:1139.6px;top:519.84px;font-size:14px;color:#124d87">192.168.122.64:8005/api/eshealth</div>
<div class="a" style="left:8px;top:558.52px;width:27px;height:26px;background:#0b72fe;border-radius:3px"></div>
<svg style="left:17.5px;top:567.72px" width="10" height="10" viewBox="0 0 10 10"><path d="M5,0.4 V9.6 M0.4,5 H9.6" stroke="#fff" stroke-width="2.7"/></svg>
<div class="t" style="left:41px;top:561.37px;font-size:14px;color:#2b4560">tcp</div>
<div class="t" style="left:95.2px;top:558.27px;font-size:14px;color:#124d87">2024/06/05</div>
<div class="t" style="left:95.2px;top:576.47px;font-size:14px;color:#124d87">17:40:06</div>
<div class="t" style="left:195.2px;top:558.27px;font-size:14px;color:#124d87">2024/06/05</div>
<div class="t" style="left:195.2px;top:576.47px;font-size:14px;color:#124d87">17:40:06</div>
<div class="t" style="left:295px;top:558.27px;font-size:14px;color:#124d87">192.168.122.1</div>
<div class="t" style="left:434.9px;top:558.27px;font-size:14px;color:#124d87">46056</div>
<div class="t" style="left:534.8px;top:558.27px;font-size:14px;color:#124d87">192.168.122.64</div>
<div class="t" style="left:674.5px;top:558.27px;font-size:14px;color:#124d87">8005</div>
<div class="t" style="left:774.5px;top:558.27px;font-size:14px;color:#124d87">8</div>
<div class="t" style="left:875px;top:558.27px;font-size:14px;color:#124d87">1,066</div>
<div class="t" style="left:875px;top:575.47px;font-size:14px;color:#124d87">1,610</div>
<div class="t" style="left:995.1px;top:558.27px;font-size:14px;color:#124d87">lb-01</div>
<div class="a" style="left:1093.3px;top:557.62px;width:39.5px;height:19.5px;border:1px solid #ccc;border-radius:3px;background:#fff"></div>
<div class="t" style="left:1098.1px;top:562.36px;font-size:12px;color:#333">URI</div>
<svg style="left:1121.5px;top:566.72px" width="6" height="4" viewBox="0 0 6 4"><path d="M0,0 H6 L3,3 Z" fill="#333"/></svg>
<div class="t" style="left:1139.6px;top:558.27px;font-size:14px;color:#124d87">192.168.122.64:8005/api/eshealth</div>
<div class="a" style="left:8px;top:596.95px;width:27px;height:26px;background:#0b72fe;border-radius:3px"></div>
<svg style="left:17.5px;top:606.15px" width="10" height="10" viewBox="0 0 10 10"><path d="M5,0.4 V9.6 M0.4,5 H9.6" stroke="#fff" stroke-width="2.7"/></svg>
<div class="t" style="left:41px;top:599.80px;font-size:14px;color:#2b4560">tcp</div>
<div class="t" style="left:95.2px;top:596.70px;font-size:14px;color:#124d87">2024/06/05</div>
<div class="t" style="left:95.2px;top:614.90px;font-size:14px;color:#124d87">17:40:06</div>
<div class="t" style="left:195.2px;top:596.70px;font-size:14px;color:#124d87">2024/06/05</div>
<div class="t" style="left:195.2px;top:614.90px;font-size:14px;color:#124d87">17:40:06</div>
<div class="t" style="left:295px;top:596.70px;font-size:14px;color:#124d87">192.168.122.1</div>
<div class="t" style="left:434.9px;top:596.70px;font-size:14px;color:#124d87">46048</div>
<div class="t" style="left:534.8px;top:596.70px;font-size:14px;color:#124d87">192.168.122.64</div>
<div class="t" style="left:674.5px;top:596.70px;font-size:14px;color:#124d87">8005</div>
<div class="t" style="left:774.5px;top:596.70px;font-size:14px;color:#124d87">8</div>
<div class="t" style="left:875px;top:596.70px;font-size:14px;color:#124d87">1,066</div>
<div class="t" style="left:875px;top:613.90px;font-size:14px;color:#124d87">1,610</div>
<div class="t" style="left:995.1px;top:596.70px;font-size:14px;color:#124d87">lb-01</div>
<div class="a" style="left:1093.3px;top:596.05px;width:39.5px;height:19.5px;border:1px solid #ccc;border-radius:3px;background:#fff"></div>
<div class="t" style="left:1098.1px;top:600.79px;font-size:12px;color:#333">URI</div>
<svg style="left:1121.5px;top:605.15px" width="6" height="4" viewBox="0 0 6 4"><path d="M0,0 H6 L3,3 Z" fill="#333"/></svg>
<div class="t" style="left:1139.6px;top:596.70px;font-size:14px;color:#124d87">192.168.122.64:8005/api/eshealth</div>
<div class="a" style="left:8px;top:635.38px;width:27px;height:26px;background:#0b72fe;border-radius:3px"></div>
<svg style="left:17.5px;top:644.58px" width="10" height="10" viewBox="0 0 10 10"><path d="M5,0.4 V9.6 M0.4,5 H9.6" stroke="#fff" stroke-width="2.7"/></svg>
<div class="t" style="left:41px;top:638.23px;font-size:14px;color:#2b4560">tcp</div>
<div class="t" style="left:95.2px;top:635.13px;font-size:14px;color:#124d87">2024/06/05</div>
<div class="t" style="left:95.2px;top:653.33px;font-size:14px;color:#124d87">17:40:06</div>
<div class="t" style="left:195.2px;top:635.13px;font-size:14px;color:#124d87">2024/06/05</div>
<div class="t" style="left:195.2px;top:653.33px;font-size:14px;color:#124d87">17:40:06</div>
<div class="t" style="left:295px;top:635.13px;font-size:14px;color:#124d87">192.168.122.1</div>
<div class="t" style="left:434.9px;top:635.13px;font-size:14px;color:#124d87">46036</div>
<div class="t" style="left:534.8px;top:635.13px;font-size:14px;color:#124d87">192.168.122.64</div>
<div class="t" style="left:674.5px;top:635.13px;font-size:14px;color:#124d87">8005</div>
<div class="t" style="left:774.5px;top:635.13px;font-size:14px;color:#124d87">8</div>
<div class="t" style="left:875px;top:635.13px;font-size:14px;color:#124d87">1,066</div>
<div class="t" style="left:875px;top:652.33px;font-size:14px;color:#124d87">1,610</div>
<div class="t" style="left:995.1px;top:635.13px;font-size:14px;color:#124d87">lb-01</div>
<div class="a" style="left:1093.3px;top:634.48px;width:39.5px;height:19.5px;border:1px solid #ccc;border-radius:3px;background:#fff"></div>
<div class="t" style="left:1098.1px;top:639.22px;font-size:12px;color:#333">URI</div>
<svg style="left:1121.5px;top:643.58px" width="6" height="4" viewBox="0 0 6 4"><path d="M0,0 H6 L3,3 Z" fill="#333"/></svg>
<div class="t" style="left:1139.6px;top:635.13px;font-size:14px;color:#124d87">192.168.122.64:8005/api/eshealth</div>
<div class="a" style="left:8px;top:673.81px;width:27px;height:26px;background:#0b72fe;border-radius:3px"></div>
<svg style="left:17.5px;top:683.01px" width="10" height="10" viewBox="0 0 10 10"><path d="M5,0.4 V9.6 M0.4,5 H9.6" stroke="#fff" stroke-width="2.7"/></svg>
<div class="t" style="left:41px;top:676.66px;font-size:14px;color:#2b4560">tcp</div>
<div class="t" style="left:95.2px;top:673.56px;font-size:14px;color:#124d87">2024/06/05</div>
<div class="t" style="left:95.2px;top:691.76px;font-size:14px;color:#124d87">17:40:06</div>
<div class="t" style="left:195.2px;top:673.56px;font-size:14px;color:#124d87">2024/06/05</div>
<div class="t" style="left:195.2px;top:691.76px;font-size:14px;color:#124d87">17:40:06</div>
<div class="t" style="left:295px;top:673.56px;font-size:14px;color:#124d87">192.168.122.1</div>
<div class="t" style="left:434.9px;top:673.56px;font-size:14px;color:#124d87">46026</div>
<div class="t" style="left:534.8px;top:673.56px;font-size:14px;color:#124d87">192.168.122.64</div>
<div class="t" style="left:674.5px;top:673.56px;font-size:14px;color:#124d87">8005</div>
<div class="t" style="left:774.5px;top:673.56px;font-size:14px;color:#124d87">9</div>
<div class="t" style="left:875px;top:673.56px;font-size:14px;color:#124d87">1,066</div>
<div class="t" style="left:875px;top:690.76px;font-size:14px;color:#124d87">1,676</div>
<div class="t" style="left:995.1px;top:673.56px;font-size:14px;color:#124d87">lb-01</div>
<div class="a" style="left:1093.3px;top:672.91px;width:39.5px;height:19.5px;border:1px solid #ccc;border-radius:3px;background:#fff"></div>
<div class="t" style="left:1098.1px;top:677.65px;font-size:12px;color:#333">URI</div>
<svg style="left:1121.5px;top:682.01px" width="6" height="4" viewBox="0 0 6 4"><path d="M0,0 H6 L3,3 Z" fill="#333"/></svg>
<div class="t" style="left:1139.6px;top:673.56px;font-size:14px;color:#124d87">192.168.122.64:8005/api/eshealth</div>
<div class="a" style="left:8px;top:712.24px;width:27px;height:26px;background:#0b72fe;border-radius:3px"></div>
<svg style="left:17.5px;top:721.44px" width="10" height="10" viewBox="0 0 10 10"><path d="M5,0.4 V9.6 M0.4,5 H9.6" stroke="#fff" stroke-width="2.7"/></svg>
<div class="t" style="left:41px;top:715.09px;font-size:14px;color:#2b4560">tcp</div>
<div class="t" style="left:95.2px;top:711.99px;font-size:14px;color:#124d87">2024/06/05</div>
<div class="t" style="left:95.2px;top:730.19px;font-size:14px;color:#124d87">17:40:06</div>
<div class="t" style="left:195.2px;top:711.99px;font-size:14px;color:#124d87">2024/06/05</div>
<div class="t" style="left:195.2px;top:730.19px;font-size:14px;color:#124d87">17:40:06</div>
<div class="t" style="left:295px;top:711.99px;font-size:14px;color:#124d87">192.168.122.1</div>
<div class="t" style="left:434.9px;top:711.99px;font-size:14px;color:#124d87">46018</div>
<div class="t" style="left:534.8px;top:711.99px;font-size:14px;color:#124d87">192.168.122.64</div>
<div class="t" style="left:674.5px;top:711.99px;font-size:14px;color:#124d87">8005</div>
<div class="t" style="left:774.5px;top:711.99px;font-size:14px;color:#124d87">8</div>
<div class="t" style="left:875px;top:711.99px;font-size:14px;color:#124d87">1,066</div>
<div class="t" style="left:875px;top:729.19px;font-size:14px;color:#124d87">1,610</div>
<div class="t" style="left:995.1px;top:711.99px;font-size:14px;color:#124d87">lb-01</div>
<div class="a" style="left:1093.3px;top:711.34px;width:39.5px;height:19.5px;border:1px solid #ccc;border-radius:3px;background:#fff"></div>
<div class="t" style="left:1098.1px;top:716.08px;font-size:12px;color:#333">URI</div>
<svg style="left:1121.5px;top:720.44px" width="6" height="4" viewBox="0 0 6 4"><path d="M0,0 H6 L3,3 Z" fill="#333"/></svg>
<div class="t" style="left:1139.6px;top:711.99px;font-size:14px;color:#124d87">192.168.122.64:8005/api/eshealth</div>
<div class="a" style="left:8px;top:750.67px;width:27px;height:26px;background:#0b72fe;border-radius:3px"></div>
<svg style="left:17.5px;top:759.87px" width="10" height="10" viewBox="0 0 10 10"><path d="M5,0.4 V9.6 M0.4,5 H9.6" stroke="#fff" stroke-width="2.7"/></svg>
<div class="t" style="left:41px;top:753.52px;font-size:14px;color:#2b4560">tcp</div>
<div class="t" style="left:95.2px;top:750.42px;font-size:14px;color:#124d87">2024/06/05</div>
<div class="t" style="left:95.2px;top:768.62px;font-size:14px;color:#124d87">17:40:06</div>
<div class="t" style="left:195.2px;top:750.42px;font-size:14px;color:#124d87">2024/06/05</div>
<div class="t" style="left:195.2px;top:768.62px;font-size:14px;color:#124d87">17:40:06</div>
<div class="t" style="left:295px;top:750.42px;font-size:14px;color:#124d87">192.168.122.1</div>
<div class="t" style="left:434.9px;top:750.42px;font-size:14px;color:#124d87">46016</div>
<div class="t" style="left:534.8px;top:750.42px;font-size:14px;color:#124d87">192.168.122.64</div>
<div class="t" style="left:674.5px;top:750.42px;font-size:14px;color:#124d87">8005</div>
<div class="t" style="left:774.5px;top:750.42px;font-size:14px;color:#124d87">8</div>
<div class="t" style="left:875px;top:750.42px;font-size:14px;color:#124d87">1,066</div>
<div class="t" style="left:875px;top:767.62px;font-size:14px;color:#124d87">1,610</div>
<div class="t" style="left:995.1px;top:750.42px;font-size:14px;color:#124d87">lb-01</div>
<div class="a" style="left:1093.3px;top:749.77px;width:39.5px;height:19.5px;border:1px solid #ccc;border-radius:3px;background:#fff"></div>
<div class="t" style="left:1098.1px;top:754.51px;font-size:12px;color:#333">URI</div>
<svg style="left:1121.5px;top:758.87px" width="6" height="4" viewBox="0 0 6 4"><path d="M0,0 H6 L3,3 Z" fill="#333"/></svg>
<div class="t" style="left:1139.6px;top:750.42px;font-size:14px;color:#124d87">192.168.122.64:8005/api/eshealth</div>
<div class="a" style="left:8px;top:789.10px;width:27px;height:26px;background:#0b72fe;border-radius:3px"></div>
<svg style="left:17.5px;top:798.30px" width="10" height="10" viewBox="0 0 10 10"><path d="M5,0.4 V9.6 M0.4,5 H9.6" stroke="#fff" stroke-width="2.7"/></svg>
<div class="t" style="left:41px;top:791.95px;font-size:14px;color:#2b4560">tcp</div>
<div class="t" style="left:95.2px;top:788.85px;font-size:14px;color:#124d87">2024/06/05</div>
<div class="t" style="left:95.2px;top:807.05px;font-size:14px;color:#124d87">17:40:06</div>
<div class="t" style="left:195.2px;top:788.85px;font-size:14px;color:#124d87">2024/06/05</div>
<div class="t" style="left:195.2px;top:807.05px;font-size:14px;color:#124d87">17:40:06</div>
<div class="t" style="left:295px;top:788.85px;font-size:14px;color:#124d87">192.168.122.1</div>
<div class="t" style="left:434.9px;top:788.85px;font-size:14px;color:#124d87">46008</div>
<div class="t" style="left:534.8px;top:788.85px;font-size:14px;color:#124d87">192.168.122.64</div>
<div class="t" style="left:674.5px;top:788.85px;font-size:14px;color:#124d87">8005</div>
<div class="t" style="left:774.5px;top:788.85px;font-size:14px;color:#124d87">8</div>
<div class="t" style="left:875px;top:788.85px;font-size:14px;color:#124d87">1,066</div>
<div class="t" style="left:875px;top:806.05px;font-size:14px;color:#124d87">1,610</div>
<div class="t" style="left:995.1px;top:788.85px;font-size:14px;color:#124d87">lb-01</div>
<div class="a" style="left:1093.3px;top:788.20px;width:39.5px;height:19.5px;border:1px solid #ccc;border-radius:3px;background:#fff"></div>
<div class="t" style="left:1098.1px;top:792.94px;font-size:12px;color:#333">URI</div>
<svg style="left:1121.5px;top:797.30px" width="6" height="4" viewBox="0 0 6 4"><path d="M0,0 H6 L3,3 Z" fill="#333"/></svg>
<div class="t" style="left:1139.6px;top:788.85px;font-size:14px;color:#124d87">192.168.122.64:8005/api/eshealth</div>
<div class="a" style="left:8px;top:827.53px;width:27px;height:26px;background:#0b72fe;border-radius:3px"></div>
<svg style="left:17.5px;top:836.73px" width="10" height="10" viewBox="0 0 10 10"><path d="M5,0.4 V9.6 M0.4,5 H9.6" stroke="#fff" stroke-width="2.7"/></svg>
<div class="t" style="left:41px;top:830.38px;font-size:14px;color:#2b4560">tcp</div>
<div class="t" style="left:95.2px;top:827.28px;font-size:14px;color:#124d87">2024/06/05</div>
<div class="t" style="left:95.2px;top:845.48px;font-size:14px;color:#124d87">17:40:06</div>
<div class="t" style="left:195.2px;top:827.28px;font-size:14px;color:#124d87">2024/06/05</div>
<div class="t" style="left:195.2px;top:845.48px;font-size:14px;color:#124d87">17:40:06</div>
<div class="t" style="left:295px;top:827.28px;font-size:14px;color:#124d87">192.168.122.1</div>
<div class="t" style="left:434.9px;top:827.28px;font-size:14px;color:#124d87">46004</div>
<div class="t" style="left:534.8px;top:827.28px;font-size:14px;color:#124d87">192.168.122.64</div>
<div class="t" style="left:674.5px;top:827.28px;font-size:14px;color:#124d87">8005</div>
<div class="t" style="left:774.5px;top:827.28px;font-size:14px;color:#124d87">8</div>
<div class="t" style="left:875px;top:827.28px;font-size:14px;color:#124d87">1,066</div>
<div class="t" style="left:875px;top:844.48px;font-size:14px;color:#124d87">1,610</div>
<div class="t" style="left:995.1px;top:827.28px;font-size:14px;color:#124d87">lb-01</div>
<div class="a" style="left:1093.3px;top:826.63px;width:39.5px;height:19.5px;border:1px solid #ccc;border-radius:3px;background:#fff"></div>
<div class="t" style="left:1098.1px;top:831.37px;font-size:12px;color:#333">URI</div>
<svg style="left:1121.5px;top:835.73px" width="6" height="4" viewBox="0 0 6 4"><path d="M0,0 H6 L3,3 Z" fill="#333"/></svg>
<div class="t" style="left:1139.6px;top:827.28px;font-size:14px;color:#124d87">192.168.122.64:8005/api/eshealth</div>
</body></html>
